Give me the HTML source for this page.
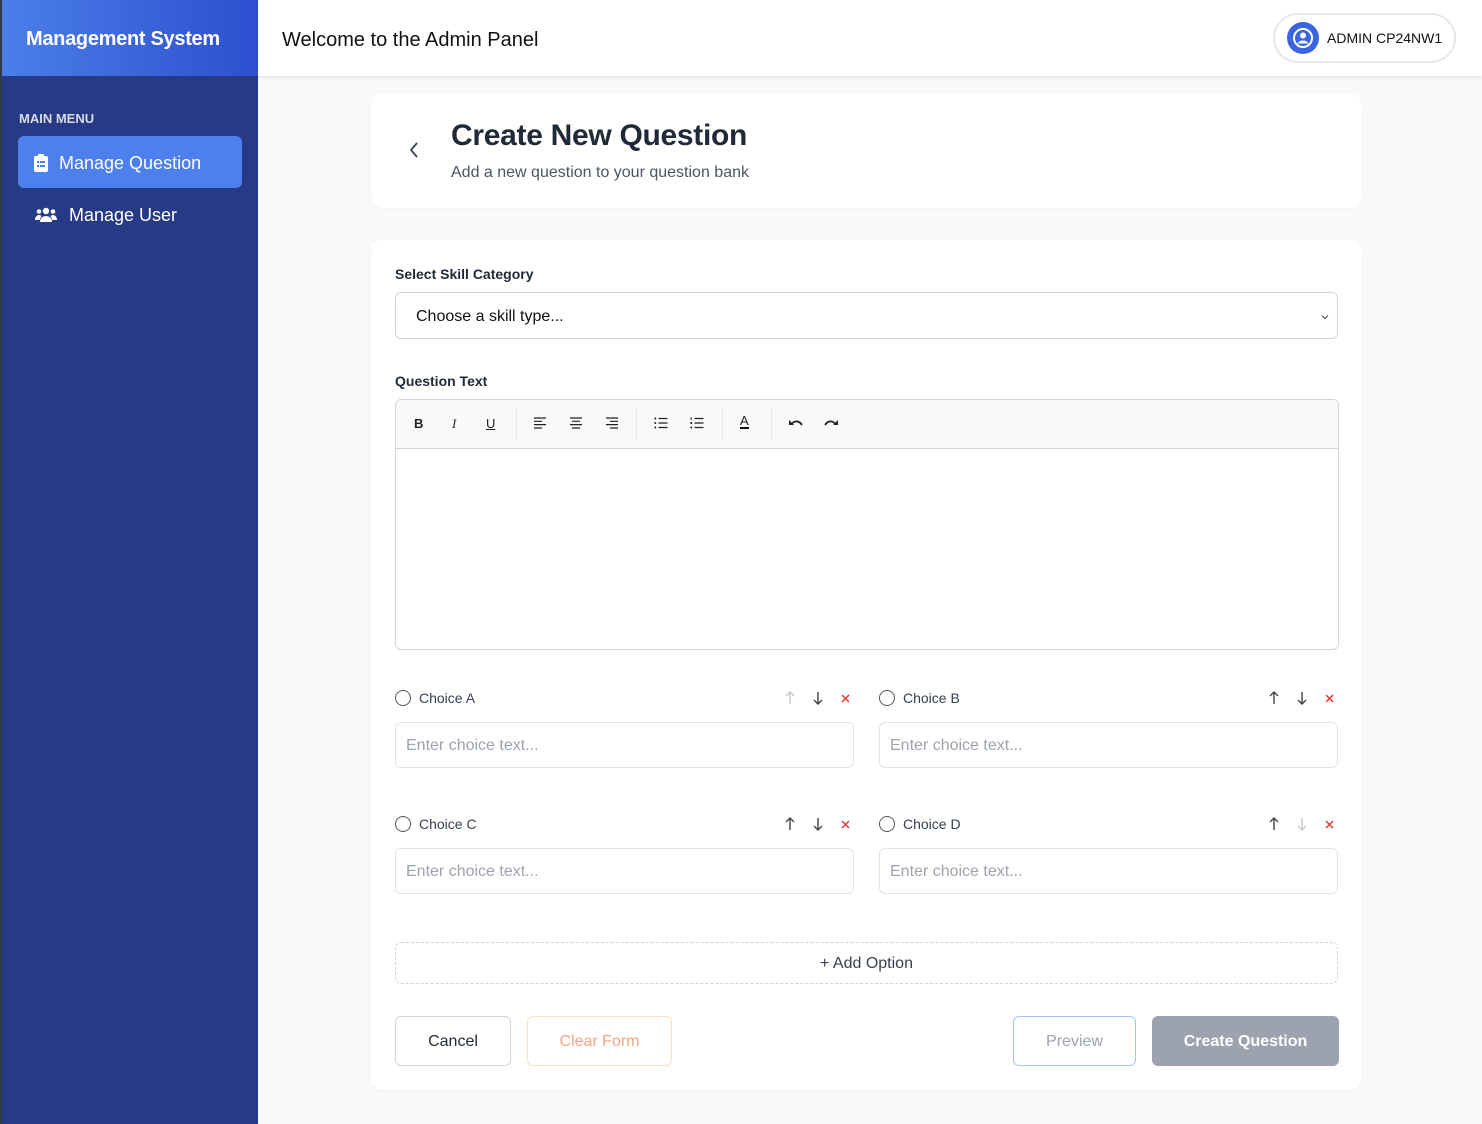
<!DOCTYPE html>
<html><head><meta charset="utf-8"><style>
*{box-sizing:border-box;margin:0;padding:0}
body{width:1482px;height:1124px;font-family:"Liberation Sans",Arial,sans-serif;background:#f8f9fb;position:relative;overflow:hidden}
.side{position:absolute;left:0;top:0;width:258px;height:1124px;background:#263a85;border-left:2px solid #333a4a}
.brand{height:76px;background:linear-gradient(90deg,#4b7fe8,#2d4fd0);color:#fff;font-weight:bold;font-size:20px;display:flex;align-items:center;padding-left:24px;padding-top:3px;letter-spacing:-0.3px}
.mm{color:#d7dcea;font-size:13px;font-weight:bold;position:absolute;left:17px;top:111px}
.item{position:absolute;left:16px;width:224px;height:52px;border-radius:6px;color:#fff;font-size:18px;display:flex;align-items:center;padding-top:2px}
.top{position:absolute;left:258px;top:0;right:0;height:76px;background:#fff;box-shadow:0 2px 4px rgba(0,0,0,.08)}
.card{position:absolute;background:#fff;border-radius:12px;box-shadow:0 1px 2px rgba(0,0,0,.03)}
.lbl{position:absolute;font-size:14px;font-weight:bold;color:#1f2937}
.inp{position:absolute;border:1px solid #e1e4e8;border-radius:6px;background:#fff;font-size:16px;color:#9ca3af;display:flex;align-items:center;padding-left:10px;padding-top:2px}
.ch{position:absolute;font-size:14px;color:#374151;display:flex;align-items:center}
.rad{width:16px;height:16px;border:1.3px solid #555;border-radius:50%;margin-right:8px}
.ic{position:absolute}
.btn{position:absolute;top:1016px;height:50px;border-radius:6px;display:flex;align-items:center;justify-content:center;font-size:16px;background:#fff;padding-top:2px}
.tb{position:absolute;top:416px;font-size:13px;color:#222}
.ts{position:absolute;top:417px}
.sep{position:absolute;top:409px;width:1px;height:30px;background:#e5e7eb}
</style></head><body>
<div class="side">
<div class="brand">Management System</div>
<div class="mm">MAIN MENU</div>
<div class="item" style="top:136px;background:#4d80ec;padding-left:16px"><svg width="14" height="18" viewBox="0 0 14 18"><rect x="0" y="2" width="14" height="16" rx="2" fill="#fff"/><rect x="4" y="0" width="6" height="4" rx="1" fill="#fff"/><g fill="#4d80ec"><rect x="3" y="7" width="2" height="2"/><rect x="6" y="7" width="5" height="2"/><rect x="3" y="11" width="2" height="2"/><rect x="6" y="11" width="5" height="2"/></g></svg><span style="margin-left:11px">Manage Question</span></div>
<div class="item" style="top:188px;padding-left:17px"><svg width="22" height="16" viewBox="0 0 22 16" fill="#fff"><circle cx="11" cy="4" r="3.2"/><circle cx="4" cy="4.5" r="2.3"/><circle cx="18" cy="4.5" r="2.3"/><path d="M5 15c0-4 3-6 6-6s6 2 6 6z"/><path d="M0 13c0-3 2-5 4-5 1 0 2 .5 2.5 1-1 1.5-1.5 3-1.5 4z"/><path d="M22 13c0-3-2-5-4-5-1 0-2 .5-2.5 1 1 1.5 1.5 3 1.5 4z"/></svg><span style="margin-left:12px">Manage User</span></div>
</div>
<div class="top">
<div style="position:absolute;left:24px;top:29px;font-size:20px;color:#111">Welcome to the Admin Panel</div>
<div style="position:absolute;left:1015px;top:13px;width:183px;height:50px;border:2px solid #e5e7eb;border-radius:25px;display:flex;align-items:center;padding-left:12px">
<svg width="32" height="32" viewBox="0 0 32 32"><circle cx="16" cy="16" r="16" fill="#3b64e0"/><circle cx="16" cy="16" r="9" fill="none" stroke="#fff" stroke-width="2"/><circle cx="16" cy="13.5" r="3" fill="#fff"/><path d="M10.5 21.5c1.5-2.5 3.5-3 5.5-3s4 .5 5.5 3" fill="#fff"/></svg>
<span style="margin-left:8px;font-size:14px;color:#111">ADMIN CP24NW1</span></div>
</div>
<div class="card" style="left:371px;top:93px;width:991px;height:115px">
<svg style="position:absolute;left:38px;top:49px" width="10" height="16" viewBox="0 0 10 16"><path d="M8 1L2 8l6 7" fill="none" stroke="#374151" stroke-width="1.8"/></svg>
<div style="position:absolute;left:80px;top:26px;font-size:30px;font-weight:bold;color:#1f2937;letter-spacing:-0.3px">Create New Question</div>
<div style="position:absolute;left:80px;top:71px;font-size:16px;color:#4b5563">Add a new question to your question bank</div>
</div>
<div class="card" style="left:371px;top:240px;width:991px;height:850px"></div>
<div class="lbl" style="left:395px;top:266px">Select Skill Category</div>
<div class="inp" style="left:395px;top:292px;width:943px;height:47px;color:#111;padding-left:20px;border-color:#d1d5db">Choose a skill type...<svg style="position:absolute;right:8px" width="8" height="6" viewBox="0 0 8 6"><path d="M1 1.5l3 3 3-3" fill="none" stroke="#555" stroke-width="1.2"/></svg></div>
<div class="lbl" style="left:395px;top:373px">Question Text</div>
<div style="position:absolute;left:395px;top:399px;width:944px;height:251px;border:1px solid #d1d5db;border-radius:6px;background:#fff;overflow:hidden"><div style="height:49px;background:#f8f9fb;border-bottom:1px solid #d1d5db"></div></div>
<div class="tb" style="left:414px;font-weight:bold">B</div>
<div class="tb" style="left:452px;font-style:italic;font-family:'Liberation Serif',serif">I</div>
<div class="tb" style="left:486px;text-decoration:underline">U</div>
<div class="sep" style="left:516px"></div>
<svg class="ts" style="left:533px" width="14" height="12" viewBox="0 0 14 12" stroke="#222" stroke-width="1.2"><path d="M1 1h12M1 4.3h8M1 7.6h12M1 11h8"/></svg>
<svg class="ts" style="left:569px" width="14" height="12" viewBox="0 0 14 12" stroke="#222" stroke-width="1.2"><path d="M1 1h12M3 4.3h8M1 7.6h12M3 11h8"/></svg>
<svg class="ts" style="left:605px" width="14" height="12" viewBox="0 0 14 12" stroke="#222" stroke-width="1.2"><path d="M1 1h12M5 4.3h8M1 7.6h12M5 11h8"/></svg>
<div class="sep" style="left:636px"></div>
<svg class="ts" style="left:654px" width="14" height="12" viewBox="0 0 14 12"><g fill="#222"><circle cx="1.3" cy="1.5" r="1"/><circle cx="1.3" cy="6" r="1"/><circle cx="1.3" cy="10.5" r="1"/></g><path d="M4.5 1.5h9M4.5 6h9M4.5 10.5h9" stroke="#222" stroke-width="1.2"/></svg>
<svg class="ts" style="left:690px" width="14" height="12" viewBox="0 0 14 12"><g fill="#222"><rect x=".5" y="0.5" width="1.2" height="2.2"/><rect x=".5" y="5" width="1.6" height="2"/><rect x=".5" y="9.5" width="1.6" height="2"/></g><path d="M4.5 1.5h9M4.5 6h9M4.5 10.5h9" stroke="#222" stroke-width="1.2"/></svg>
<div class="sep" style="left:722px"></div>
<div class="tb" style="left:740px;border-bottom:2.5px solid #111;line-height:12px;top:415px">A</div>
<div class="sep" style="left:771px"></div>
<svg class="ts" style="left:788px;top:419px" width="15" height="10" viewBox="0 0 15 10"><path d="M4 4.5c3-3 7-3 10 1.5" fill="none" stroke="#222" stroke-width="1.8"/><path d="M1 1v5h5z" fill="#222"/></svg>
<svg class="ts" style="left:824px;top:419px" width="15" height="10" viewBox="0 0 15 10"><path d="M11 4.5c-3-3-7-3-10 1.5" fill="none" stroke="#222" stroke-width="1.8"/><path d="M14 1v5h-5z" fill="#222"/></svg>

<div class="ch" style="left:395px;top:690px"><div class="rad"></div>Choice A</div>
<div class="inp" style="left:395px;top:722px;width:459px;height:46px">Enter choice text...</div>
<div class="ch" style="left:879px;top:690px"><div class="rad"></div>Choice B</div>
<div class="inp" style="left:879px;top:722px;width:459px;height:46px">Enter choice text...</div>
<div class="ch" style="left:395px;top:816px"><div class="rad"></div>Choice C</div>
<div class="inp" style="left:395px;top:848px;width:459px;height:46px">Enter choice text...</div>
<div class="ch" style="left:879px;top:816px"><div class="rad"></div>Choice D</div>
<div class="inp" style="left:879px;top:848px;width:459px;height:46px">Enter choice text...</div>

<svg class="ic" style="left:785px;top:691px" width="10" height="14" viewBox="0 0 10 14" fill="none" stroke="#c4c7cc" stroke-width="1.4"><path d="M5 13V1M1 5l4-4 4 4"/></svg>
<svg class="ic" style="left:813px;top:691px" width="10" height="14" viewBox="0 0 10 14" fill="none" stroke="#444" stroke-width="1.4"><path d="M5 1v12M1 9l4 4 4-4"/></svg>
<svg class="ic" style="left:841px;top:694px" width="9" height="9" viewBox="0 0 9 9" stroke="#e53935" stroke-width="1.5"><path d="M1 1l7 7M8 1L1 8"/></svg>
<svg class="ic" style="left:1269px;top:691px" width="10" height="14" viewBox="0 0 10 14" fill="none" stroke="#444" stroke-width="1.4"><path d="M5 13V1M1 5l4-4 4 4"/></svg>
<svg class="ic" style="left:1297px;top:691px" width="10" height="14" viewBox="0 0 10 14" fill="none" stroke="#444" stroke-width="1.4"><path d="M5 1v12M1 9l4 4 4-4"/></svg>
<svg class="ic" style="left:1325px;top:694px" width="9" height="9" viewBox="0 0 9 9" stroke="#e53935" stroke-width="1.5"><path d="M1 1l7 7M8 1L1 8"/></svg>
<svg class="ic" style="left:785px;top:817px" width="10" height="14" viewBox="0 0 10 14" fill="none" stroke="#444" stroke-width="1.4"><path d="M5 13V1M1 5l4-4 4 4"/></svg>
<svg class="ic" style="left:813px;top:817px" width="10" height="14" viewBox="0 0 10 14" fill="none" stroke="#444" stroke-width="1.4"><path d="M5 1v12M1 9l4 4 4-4"/></svg>
<svg class="ic" style="left:841px;top:820px" width="9" height="9" viewBox="0 0 9 9" stroke="#e53935" stroke-width="1.5"><path d="M1 1l7 7M8 1L1 8"/></svg>
<svg class="ic" style="left:1269px;top:817px" width="10" height="14" viewBox="0 0 10 14" fill="none" stroke="#444" stroke-width="1.4"><path d="M5 13V1M1 5l4-4 4 4"/></svg>
<svg class="ic" style="left:1297px;top:817px" width="10" height="14" viewBox="0 0 10 14" fill="none" stroke="#c4c7cc" stroke-width="1.4"><path d="M5 1v12M1 9l4 4 4-4"/></svg>
<svg class="ic" style="left:1325px;top:820px" width="9" height="9" viewBox="0 0 9 9" stroke="#e53935" stroke-width="1.5"><path d="M1 1l7 7M8 1L1 8"/></svg>

<div style="position:absolute;left:395px;top:942px;width:943px;height:42px;border:1px dashed #d1d5db;border-radius:6px;display:flex;align-items:center;justify-content:center;font-size:16px;color:#374151;padding-top:2px">+ Add Option</div>
<div class="btn" style="left:395px;width:116px;border:1px solid #d1d5db;color:#1f2937">Cancel</div>
<div class="btn" style="left:527px;width:145px;border:1px solid #fde0c0;color:#f4a582">Clear Form</div>
<div class="btn" style="left:1013px;width:123px;border:1px solid #a5c6f5;color:#9ca3af">Preview</div>
<div class="btn" style="left:1152px;width:187px;background:#9ca3af;color:#fff;font-weight:bold">Create Question</div>
</body></html>
